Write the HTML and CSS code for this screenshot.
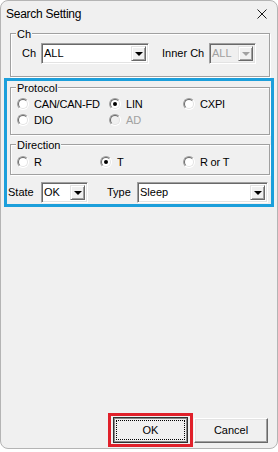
FILE: index.html
```html
<!DOCTYPE html>
<html lang="en">
<head>
  <meta charset="UTF-8">
  <meta name="viewport" content="width=device-width, initial-scale=1.0">
  <title>Search Setting</title>
  <link rel="stylesheet" href="styles.css">
</head>
<body>
  <div class="window">
    <div class="titlebar">
      <span class="title">Search Setting</span>
      <svg class="close" width="10" height="10" viewBox="0 0 10 10">
        <path d="M0.5 0.5 L9.5 9.5 M9.5 0.5 L0.5 9.5" stroke="#1a1a1a" stroke-width="1" fill="none"/>
      </svg>
    </div>

    <fieldset class="group group-ch">
      <legend>Ch</legend>
      <div class="field-row ch-row">
        <span class="lbl lbl-ch">Ch</span>
        <div class="combo combo-ch">
          <span class="combo-text">ALL</span>
          <span class="drop"><i class="arrow"></i></span>
        </div>
        <span class="lbl lbl-inner">Inner Ch</span>
        <div class="combo combo-inner disabled">
          <span class="combo-text">ALL</span>
          <span class="drop"><i class="arrow"></i></span>
        </div>
      </div>
    </fieldset>

    <div class="highlight">
      <fieldset class="group group-protocol">
        <legend>Protocol</legend>
        <div class="radios radios-protocol">
          <label class="radio"><span class="dot"></span>CAN/CAN-FD</label>
          <label class="radio"><span class="dot on"></span>LIN</label>
          <label class="radio"><span class="dot"></span>CXPI</label>
          <label class="radio"><span class="dot"></span>DIO</label>
          <label class="radio disabled"><span class="dot"></span>AD</label>
        </div>
      </fieldset>

      <fieldset class="group group-direction">
        <legend>Direction</legend>
        <div class="radios radios-direction">
          <label class="radio"><span class="dot"></span>R</label>
          <label class="radio"><span class="dot on"></span>T</label>
          <label class="radio"><span class="dot"></span>R or T</label>
        </div>
      </fieldset>

      <div class="field-row state-row">
        <span class="lbl lbl-state">State</span>
        <div class="combo combo-state">
          <span class="combo-text">OK</span>
          <span class="drop"><i class="arrow"></i></span>
        </div>
        <span class="lbl lbl-type">Type</span>
        <div class="combo combo-type">
          <span class="combo-text">Sleep</span>
          <span class="drop"><i class="arrow"></i></span>
        </div>
      </div>
    </div>

    <div class="buttons">
      <div class="focus-mark">
        <button class="btn btn-default"><span class="focus-ring">OK</span></button>
      </div>
      <button class="btn">Cancel</button>
    </div>
  </div>
</body>
</html>
```

FILE: styles.css
```css
body {
  margin: 0;
  background: #fff;
  font-family: "Liberation Sans", Arial, sans-serif;
  font-size: 11px;
  color: #000;
}

.window {
  box-sizing: border-box;
  width: 278px;
  height: 449px;
  border: 1px solid #b4b4b4;
  border-radius: 8px;
  background: #f0f0f0;
  display: flex;
  flex-direction: column;
}

.titlebar {
  box-sizing: border-box;
  height: 26px;
  padding: 6px 10px 0 5px;
  display: flex;
  justify-content: space-between;
  align-items: flex-start;
}

.title {
  font-size: 12px;
  line-height: 14px;
  letter-spacing: -0.25px;
  color: #000;
}

.close {
  margin-top: 2px;
}

/* group boxes */
.group {
  margin: 0;
  padding: 0;
  border: 1px solid #a0a0a0;
  box-shadow: inset 1px 1px 0 #fff, 1px 1px 0 #fff;
  min-width: 0;
}

.group legend {
  margin-left: 5px;
  padding: 2px 1px 0;
  line-height: 11px;
  background: #f0f0f0;
}

.group-ch {
  margin: 0 7px 0 9px;
}

.field-row {
  display: flex;
  align-items: center;
}

.ch-row {
  padding: 3px 0 12px 11px;
}

.lbl {
  line-height: 13px;
}

.lbl-ch { width: 19px; }
.lbl-inner { width: 47px; margin-left: 13px; }
.lbl-state { width: 33px; }
.lbl-type { width: 30px; margin-left: 19px; }

/* combo boxes */
.combo {
  box-sizing: border-box;
  height: 21px;
  padding: 2px;
  border: 1px solid;
  border-color: #a0a0a0 #fff #fff #a0a0a0;
  box-shadow: inset 1px 1px 0 #696969, inset -1px -1px 0 #e3e3e3;
  background: #fff;
  display: flex;
  align-items: center;
}

.combo-text {
  flex: 1;
  line-height: 13px;
}

.combo-ch { width: 108px; }
.combo-inner { width: 47px; }
.combo-state { width: 47px; }
.combo-type { width: 131px; }

.drop {
  box-sizing: border-box;
  width: 15px;
  height: 100%;
  background: #f0f0f0;
  border: 1px solid;
  border-color: #e3e3e3 #696969 #696969 #e3e3e3;
  box-shadow: inset 1px 1px 0 #fff, inset -1px -1px 0 #a0a0a0;
  display: flex;
  justify-content: center;
  align-items: center;
}

.arrow {
  width: 0;
  height: 0;
  border-left: 4px solid transparent;
  border-right: 4px solid transparent;
  border-top: 4px solid #000;
  margin-top: 1px;
}

.combo.disabled {
  background: #f0f0f0;
  color: #a0a0a0;
}

.combo.disabled .arrow {
  border-top-color: #a0a0a0;
}

/* highlighted area */
.highlight {
  margin: 1px 3px 0 3px;
  padding: 0 1px 1px 0;
  border: 3px solid #1c9fdb;
}

.group-protocol,
.group-direction {
  margin-left: 3px;
}

.group-direction {
  margin-top: 3px;
}

.radios {
  display: grid;
  padding-left: 6px;
}

.radios-protocol {
  grid-template-columns: 92px 74px 1fr;
  grid-auto-rows: 16px;
  padding-top: 2px;
  padding-bottom: 6px;
}

.radios-direction {
  grid-template-columns: 83px 83px 1fr;
  grid-auto-rows: 16px;
  padding-top: 3px;
  padding-bottom: 4px;
}

.radio {
  display: flex;
  align-items: center;
  line-height: 13px;
  letter-spacing: -0.2px;
}

.dot {
  position: relative;
  box-sizing: border-box;
  flex: none;
  width: 12px;
  height: 12px;
  margin-right: 5px;
  border-radius: 50%;
  border: 1px solid;
  border-color: #a0a0a0 #fff #fff #a0a0a0;
  background: #fff;
}

.dot::before {
  content: "";
  position: absolute;
  inset: 0;
  border-radius: 50%;
  border: 1px solid;
  border-color: #696969 #e3e3e3 #e3e3e3 #696969;
}

.dot.on::after {
  content: "";
  position: absolute;
  top: 3px;
  left: 3px;
  width: 4px;
  height: 4px;
  border-radius: 50%;
  background: #000;
}

.radio.disabled {
  color: #a0a0a0;
}

.radio.disabled .dot {
  background: #f0f0f0;
}

.state-row {
  margin-top: 7px;
  padding-left: 1px;
}

/* buttons */
.buttons {
  margin-top: auto;
  margin-bottom: 1px;
  padding-right: 9px;
  display: flex;
  justify-content: flex-end;
  align-items: center;
  gap: 1px;
}

.focus-mark {
  border: 3px solid #e0202a;
  padding: 1px 2px;
  display: flex;
}

.btn {
  box-sizing: border-box;
  width: 74px;
  height: 25px;
  padding: 0;
  font-family: "Liberation Sans", Arial, sans-serif;
  font-size: 11px;
  color: #000;
  background: #f0f0f0;
  border: 1px solid;
  border-color: #fff #696969 #696969 #fff;
  box-shadow: inset -1px -1px 0 #a0a0a0, inset 1px 1px 0 #e3e3e3;
}

.btn-default {
  width: 75px;
  height: 26px;
  padding: 2px;
  border: 1px solid #303030;
  box-shadow: inset 0 0 0 1px #8a8a8a;
  display: flex;
}

.focus-ring {
  flex: 1;
  border: 1px dotted #000;
  display: flex;
  justify-content: center;
  align-items: center;
}
```
